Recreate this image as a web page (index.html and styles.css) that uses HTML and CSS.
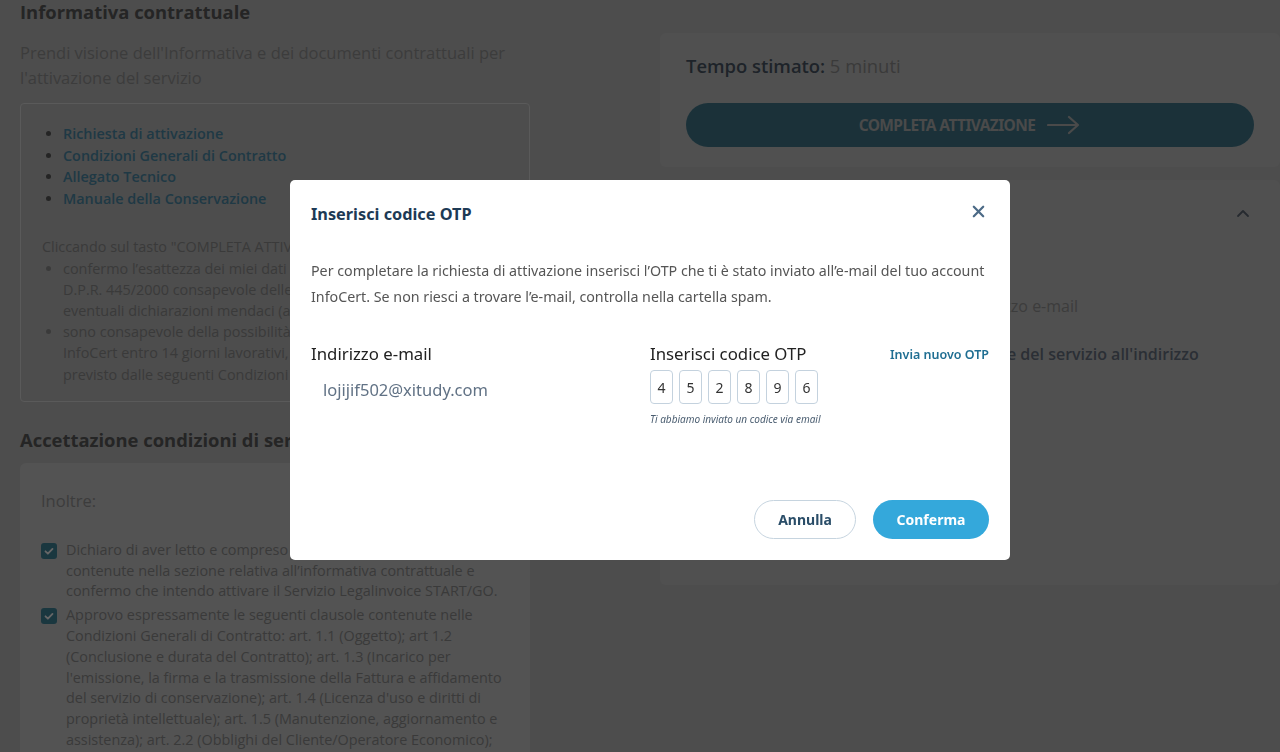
FILE: index.html
```html
<!DOCTYPE html>
<html lang="it">
<head>
<meta charset="utf-8">
<title>Attivazione servizio</title>
<link rel="stylesheet" href="styles.css">
</head>
<body>
<div class="page">
  <main class="left">
    <h2 class="section-title">Informativa contrattuale</h2>
    <p class="lead">Prendi visione dell'Informativa e dei documenti contrattuali per l'attivazione del servizio</p>
    <div class="doc-box">
      <ul class="doc-links">
        <li><a href="#">Richiesta di attivazione</a></li>
        <li><a href="#">Condizioni Generali di Contratto</a></li>
        <li><a href="#">Allegato Tecnico</a></li>
        <li><a href="#">Manuale della Conservazione</a></li>
      </ul>
      <p class="terms-intro">Cliccando sul tasto "COMPLETA ATTIVAZIONE":</p>
      <ul class="terms-list">
        <li>confermo l’esattezza dei miei dati ai sensi degli artt. 46 e 47<br>D.P.R. 445/2000 consapevole delle sanzioni penali in caso di<br>eventuali dichiarazioni mendaci (art. 76 D.P.R. 445/2000);</li>
        <li>sono consapevole della possibilità di recedere comunicandolo a<br>InfoCert entro 14 giorni lavorativi, secondo quanto<br>previsto dalle seguenti Condizioni Generali di Contratto.</li>
      </ul>
    </div>
    <h2 class="section-title title-accept">Accettazione condizioni di servizio</h2>
    <div class="accept-box">
      <p class="accept-intro">Inoltre:</p>
      <div class="check-row">
        <span class="checkbox"><svg viewBox="0 0 16 16" width="16" height="16"><path d="M4.5 8.3l2.4 2.4 4.6-4.8" fill="none" stroke="#fff" stroke-width="1.8" stroke-linecap="round" stroke-linejoin="round"/></svg></span>
        <span class="check-text">Dichiaro di aver letto e compreso le condizioni generali<br>contenute nella sezione relativa all’informativa contrattuale e confermo che intendo attivare il Servizio Legalinvoice START/GO.</span>
      </div>
      <div class="check-row">
        <span class="checkbox"><svg viewBox="0 0 16 16" width="16" height="16"><path d="M4.5 8.3l2.4 2.4 4.6-4.8" fill="none" stroke="#fff" stroke-width="1.8" stroke-linecap="round" stroke-linejoin="round"/></svg></span>
        <span class="check-text">Approvo espressamente le seguenti clausole contenute nelle Condizioni Generali di Contratto: art. 1.1 (Oggetto); art 1.2 (Conclusione e durata del Contratto); art. 1.3 (Incarico per l'emissione, la firma e la trasmissione della Fattura e affidamento del servizio di conservazione); art. 1.4 (Licenza d'uso e diritti di proprietà intellettuale); art. 1.5 (Manutenzione, aggiornamento e assistenza); art. 2.2 (Obblighi del Cliente/Operatore Economico); art. 3 (Corrispettivi e modalità di pagamento); art. 4 (Recesso).</span>
      </div>
    </div>
  </main>
  <aside class="right">
    <div class="card card-time">
      <p class="time"><strong>Tempo stimato:</strong> 5 minuti</p>
      <button class="btn-complete" type="button">COMPLETA ATTIVAZIONE
        <svg viewBox="0 0 34 20" width="34" height="20"><path d="M1 10h30M22 2l9 8-9 8" fill="none" stroke="currentColor" stroke-width="2.2" stroke-linecap="round" stroke-linejoin="round"/></svg>
      </button>
    </div>
    <div class="card card-summary">
      <div class="summary-head">
        <span class="summary-title">Riepilogo attivazione</span>
        <svg viewBox="0 0 14 10" width="14" height="10"><path d="M2 8l5-5 5 5" fill="none" stroke="currentColor" stroke-width="1.8" stroke-linecap="round" stroke-linejoin="round"/></svg>
      </div>
      <p class="summary-line">Ti manderemo un codice OTP sul tuo indirizzo e-mail</p>
      <p class="summary-strong">Riceverai la comunicazione dell'attivazione del servizio all'indirizzo</p>
    </div>
  </aside>
</div>

<div class="backdrop">
  <div class="modal" role="dialog">
    <div class="modal-head">
      <h3 class="modal-title">Inserisci codice OTP</h3>
      <button class="modal-close" type="button" aria-label="Chiudi">
        <svg viewBox="0 0 16 16" width="15" height="15"><path d="M3 3l10 10M13 3L3 13" fill="none" stroke="currentColor" stroke-width="2.4" stroke-linecap="round"/></svg>
      </button>
    </div>
    <p class="modal-text">Per completare la richiesta di attivazione inserisci l’OTP che ti è stato inviato all’e-mail del tuo account InfoCert. Se non riesci a trovare l’e-mail, controlla nella cartella spam.</p>
    <div class="fields">
      <div class="field">
        <div class="field-label">Indirizzo e-mail</div>
        <div class="email-value">lojijif502@xitudy.com</div>
      </div>
      <div class="field">
        <div class="otp-head">
          <span class="field-label">Inserisci codice OTP</span>
          <a class="resend" href="#">Invia nuovo OTP</a>
        </div>
        <div class="otp-boxes">
          <span class="otp">4</span><span class="otp">5</span><span class="otp">2</span><span class="otp">8</span><span class="otp">9</span><span class="otp">6</span>
        </div>
        <div class="otp-hint">Ti abbiamo inviato un codice via email</div>
      </div>
    </div>
    <div class="modal-foot">
      <button class="btn btn-cancel" type="button">Annulla</button>
      <button class="btn btn-confirm" type="button">Conferma</button>
    </div>
  </div>
</div>
</body>
</html>
```

FILE: styles.css
```css
* { box-sizing: border-box; }
html, body { margin: 0; padding: 0; }
body {
  width: 1280px;
  height: 752px;
  overflow: hidden;
  background: #c0c0c0;
  color: #929292;
  font-family: "Open Sans", "Noto Sans", sans-serif;
}
p { margin: 0; }

.page {
  display: flex;
  gap: 130px;
  padding-left: 20px;
}

.left { width: 510px; flex: none; }

.section-title {
  margin: 0;
  font-size: 18.4px;
  line-height: 24px;
  font-weight: 700;
  color: #5c5c5c;
}
.title-accept { margin-top: 26px; }

.lead {
  margin: 16px 0 13px;
  font-size: 16.5px;
  line-height: 25px;
  color: #979797;
}

.doc-box {
  border: 1px solid #e0e0e0;
  border-radius: 4px;
  padding: 19px 20px 16px 21px;
}
.doc-links {
  margin: 0 0 27px;
  padding-left: 21px;
  font-size: 14.4px;
  line-height: 21.6px;
  color: #5a5a5a;
}
.doc-links a {
  color: #4f8fac;
  font-weight: 600;
  text-decoration: none;
}
.terms-intro, .terms-list {
  font-size: 14.4px;
  line-height: 21.2px;
  color: #929292;
}
.terms-list { margin: 0; padding-left: 21px; }

.accept-box {
  margin-top: 11px;
  background: #cfcfcf;
  border-radius: 6px;
  padding: 26px 21px 0 21px;
  height: 320px;
}
.accept-intro {
  font-size: 16.5px;
  line-height: 24px;
  color: #979797;
  margin-bottom: 27px;
}
.check-row {
  display: flex;
  gap: 9px;
  margin-bottom: 3px;
  font-size: 14.4px;
  line-height: 20.8px;
  color: #929292;
}
.checkbox {
  flex: none;
  width: 16px;
  height: 16px;
  margin-top: 3px;
  border-radius: 3px;
  background: #43899f;
  display: flex;
}
.check-text { width: 443px; }

.right {
  width: 620px;
  flex: none;
  padding-top: 33px;
  display: flex;
  flex-direction: column;
  gap: 13px;
}
.card {
  background: #c8c8c8;
  border-radius: 6px;
  padding: 0 26px;
}
.card-time {
  height: 134px;
  padding-top: 21px;
}
.time {
  font-size: 18.4px;
  line-height: 24px;
  color: #929292;
}
.time strong { font-weight: 600; color: #4c5867; }
.btn-complete {
  margin-top: 25px;
  width: 100%;
  height: 44px;
  border: none;
  border-radius: 22px;
  background: #447c90;
  color: #b8b8b8;
  font-family: "Noto Sans", "Open Sans", sans-serif;
  font-stretch: 75%;
  font-weight: 700;
  font-size: 15.5px;
  letter-spacing: -0.6px;
  display: flex;
  align-items: center;
  justify-content: center;
  gap: 12px;
}

.card-summary {
  height: 405px;
  padding-top: 21px;
}
.summary-head {
  display: flex;
  justify-content: space-between;
  align-items: center;
  height: 24px;
  color: #5f6977;
  font-size: 18px;
  font-weight: 700;
}
.summary-head svg { margin-right: 4px; }
.summary-line {
  margin-top: 69px;
  font-size: 16px;
  line-height: 24px;
  color: #979797;
}
.summary-strong {
  margin-top: 24px;
  font-size: 16px;
  line-height: 24px;
  font-weight: 600;
  color: #6b7585;
}

/* Modal */
.backdrop {
  position: fixed;
  inset: 0;
  background: rgba(0, 0, 0, 0.6);
  padding: 180px 0 0 290px;
}
.modal {
  width: 720px;
  height: 380px;
  background: #fff;
  border-radius: 5px;
  display: flex;
  flex-direction: column;
  font-family: "Noto Sans", "Open Sans", sans-serif;
  font-stretch: 87.5%;
  color: #333;
}
.modal-head {
  display: flex;
  justify-content: space-between;
  align-items: center;
  padding: 22px 24px 0 21px;
}
.modal-title {
  margin: 0;
  font-size: 16.3px;
  line-height: 24px;
  font-weight: 700;
  color: #1d3a55;
}
.modal-close {
  border: none;
  background: none;
  padding: 0;
  margin-top: -6px;
  color: #4c6a86;
  display: flex;
}
.modal-text {
  margin: 32px 21px 0;
  font-size: 14.25px;
  line-height: 26px;
  color: #555;
}
.fields {
  display: grid;
  grid-template-columns: 1fr 1fr;
  margin: 32px 21px 0 21px;
}
.field-label {
  font-size: 16.8px;
  line-height: 24px;
  color: #222;
}
.email-value {
  margin-top: 12px;
  padding-left: 12px;
  font-size: 16.5px;
  line-height: 24px;
  color: #617285;
}
.otp-head {
  display: flex;
  justify-content: space-between;
  align-items: center;
}
.resend {
  font-size: 12.5px;
  font-weight: 600;
  color: #1f6e92;
  text-decoration: none;
}
.otp-boxes {
  display: flex;
  gap: 6px;
  margin-top: 4px;
}
.otp {
  width: 23px;
  height: 34px;
  border: 1px solid #c4d2de;
  border-radius: 4px;
  display: flex;
  align-items: center;
  justify-content: center;
  font-size: 14px;
  color: #333;
}
.otp-hint {
  margin-top: 8px;
  font-size: 10px;
  line-height: 14px;
  font-style: italic;
  color: #4a5d70;
}
.modal-foot {
  margin-top: auto;
  display: flex;
  justify-content: flex-end;
  gap: 17px;
  padding: 0 21px 21px;
}
.btn {
  height: 39px;
  border-radius: 20px;
  font-family: "Noto Sans", "Open Sans", sans-serif;
  font-stretch: 87.5%;
  font-size: 14px;
  font-weight: 700;
}
.btn-cancel {
  width: 102px;
  background: #fff;
  border: 1px solid #c6d4df;
  color: #2a4d68;
}
.btn-confirm {
  width: 116px;
  background: #34a8db;
  border: none;
  color: #fff;
}
```
